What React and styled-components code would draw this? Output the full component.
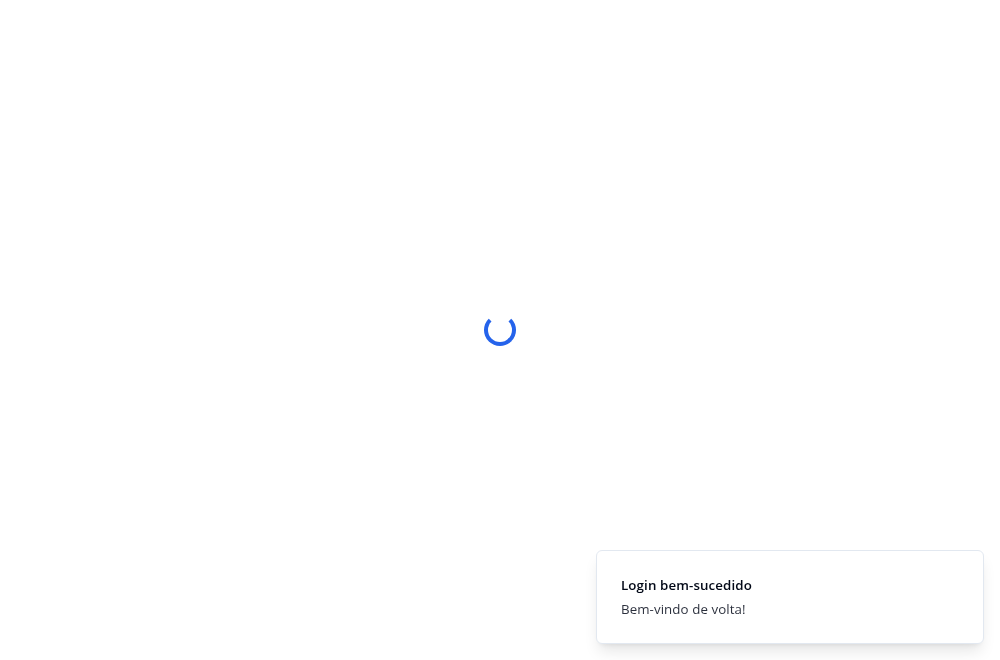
import React from "react";
import styled, { createGlobalStyle } from "styled-components";

const GlobalStyle = createGlobalStyle`
  *, *::before, *::after { box-sizing: border-box; }
  body {
    margin: 0;
    background: #fff;
    color: #020817;
    font-family: "Segoe UI", "Open Sans", "Noto Sans", sans-serif;
    overflow: hidden;
  }
`;

const Page = styled.main`
  min-height: 100vh;
  display: flex;
  align-items: center;
  justify-content: center;
`;

const Spinner = styled.div`
  width: 32px;
  height: 32px;
  border: 4px solid #2563eb;
  border-top-color: transparent;
  border-radius: 50%;
`;

const ToastViewport = styled.div`
  position: fixed;
  right: 0;
  bottom: 0;
  width: 420px;
  padding: 16px;
`;

const Toast = styled.div`
  display: flex;
  align-items: center;
  padding: 24px 32px 24px 24px;
  border: 1px solid #e2e8f0;
  border-radius: 6px;
  background: #fff;
  box-shadow: 0 10px 15px -3px rgba(0, 0, 0, 0.1), 0 4px 6px -4px rgba(0, 0, 0, 0.1);
`;

const ToastBody = styled.div`
  display: grid;
  gap: 4px;
`;

const ToastTitle = styled.div`
  font-size: 13.3px;
  line-height: 20px;
  font-weight: 570;
  letter-spacing: 0.12px;
`;

const ToastDescription = styled.div`
  font-size: 13.3px;
  line-height: 20px;
  font-weight: 370;
  opacity: 0.84;
  letter-spacing: 0.08px;
`;

export default function App() {
  return (
    <>
      <GlobalStyle />
      <Page>
        <Spinner />
      </Page>
      <ToastViewport>
        <Toast>
          <ToastBody>
            <ToastTitle>Login bem-sucedido</ToastTitle>
            <ToastDescription>Bem-vindo de volta!</ToastDescription>
          </ToastBody>
        </Toast>
      </ToastViewport>
    </>
  );
}
